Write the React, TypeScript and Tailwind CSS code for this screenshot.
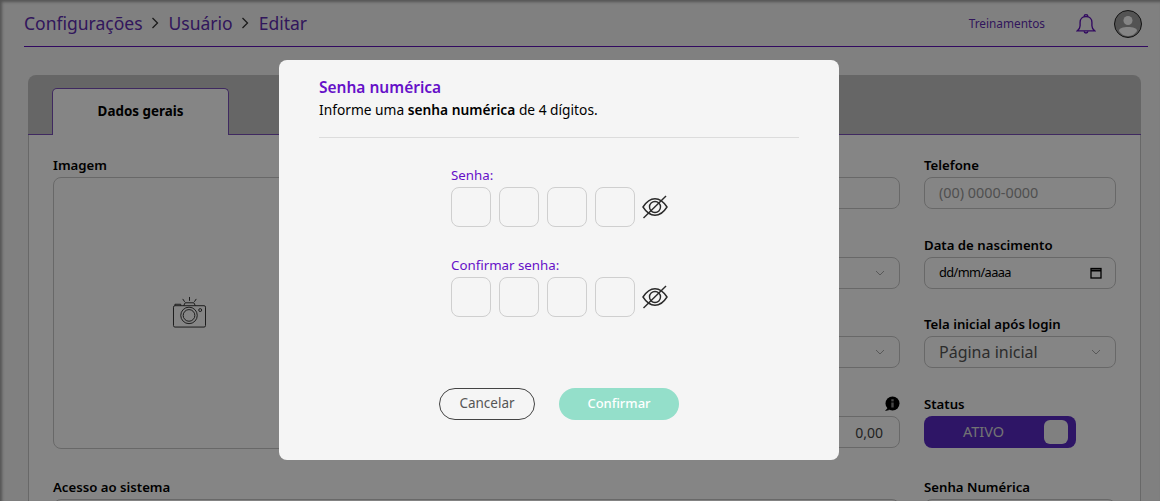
import React from "react";

const Label = ({ children, className = "" }: { children?: React.ReactNode; className?: string }) => (
  <div className={`h-[24px] text-[13.2px] font-semibold leading-[24px] text-black ${className}`}>{children}</div>
);

const Field = ({ children, className = "" }: { children?: React.ReactNode; className?: string }) => (
  <div className={`flex h-[32px] items-center justify-between rounded-lg border border-[#c8c8c8] px-[14px] text-[14px] text-[#444] ${className}`}>{children}</div>
);

const Chevron = () => (
  <svg width="10" height="6" viewBox="0 0 10 6" fill="none" stroke="#aaa" strokeWidth="1">
    <path d="M1 1l4 4 4-4" />
  </svg>
);

const EyeOff = () => (
  <svg width="26" height="24" viewBox="0 0 26 24" fill="none" stroke="#2a2a2a" strokeWidth="1.4" className="-ml-[1px]">
    <path d="M1 12C4.500 6.500 9 3.700 13 3.700S21.500 6.500 25 12C21.500 17.500 17 20.300 13 20.300S4.500 17.500 1 12Z" />
    <circle cx="13" cy="12" r="5.500" />
    <path d="M1.500 23L24 1" />
  </svg>
);

const PinRow = () => (
  <div className="flex items-center gap-2">
    <div className="size-10 rounded-lg border border-[#cfcfcf]" />
    <div className="size-10 rounded-lg border border-[#cfcfcf]" />
    <div className="size-10 rounded-lg border border-[#cfcfcf]" />
    <div className="size-10 rounded-lg border border-[#cfcfcf]" />
    <EyeOff />
  </div>
);

const Crumb = () => (
  <svg width="9" height="14" viewBox="0 0 9 14" fill="none" stroke="#333" strokeWidth="1.3" className="mx-[8.500px]">
    <path d="M1.500 2l5 5-5 5" />
  </svg>
);

export default function App() {
  return (
    <div className="relative h-[501px] w-[1160px] overflow-hidden bg-[#f5f5f5] font-['Noto_Sans',sans-serif]">
      <header className="ml-6 mr-3 flex h-[47px] items-center justify-between border-b border-[#5f12b8]">
        <div className="flex items-center text-[17.500px] text-[#5f2db0]">
          <span>Configurações</span>
          <Crumb />
          <span>Usuário</span>
          <Crumb />
          <span>Editar</span>
        </div>
        <div className="mr-[6px] flex items-center pt-[2px]">
          <span className="text-[11.800px] text-[#5f2db0]">Treinamentos</span>
          <svg width="20" height="22" viewBox="0 0 22 24" fill="none" stroke="#5f12b8" strokeWidth="1.500" className="ml-[31px]">
            <path d="M1.500 19.500c2-1.500 3-3 3-5.500V10c0-3.500 2.500-6.300 6.500-6.300S17.500 6.500 17.500 10v4c0 2.500 1 4 3 5.500Z" />
            <path d="M9 3.500C9 1 13 1 13 3.500M9 20c0 2.500 4 2.500 4 0" />
          </svg>
          <svg width="28" height="28" viewBox="0 0 28 28" className="ml-[18px]">
            <circle cx="14" cy="14" r="13.500" fill="#a0a0a0" stroke="#222" strokeWidth="1" />
            <circle cx="14" cy="10.500" r="4.500" fill="#fff" />
            <path d="M5 21c0-3 4-4 9-4s9 1 9 4c-2 3-5 5-9 5s-7-2-9-5Z" fill="#fff" />
          </svg>
        </div>
      </header>

      <main className="ml-[28px] mt-[28px] w-[1113px] overflow-hidden rounded-t-lg">
        <div className="flex h-[60px] items-end border-b border-[#7a50b8] bg-[#c4c4c4] pl-6">
          <div className="-mb-[1px] flex h-[47px] w-[177px] items-center justify-center rounded-t-[5px] border border-b-0 border-[#7a50b8] bg-white pb-[2px] text-[13.400px] font-bold text-black">
            Dados gerais
          </div>
        </div>
        <div className="h-[400px] border-x border-[#c8c8c8] bg-white px-6 pt-[18px]">
          <div className="flex gap-6">
            <div className="w-[272px]">
              <Label>Imagem</Label>
              <div className="flex h-[272px] items-center justify-center rounded-lg border border-[#c8c8c8] pb-[1px]">
                <svg width="37" height="33" viewBox="0 0 36 34" fill="none" stroke="#333" strokeWidth="1">
                  <path d="M18 1v4M11 3l2 3M25 3l-2 3" />
                  <rect x="1.500" y="10" width="33" height="22" rx="1.500" />
                  <path d="M12 10l1.500-3h9L24 10M3 10V8.500h6V10" />
                  <circle cx="17.500" cy="20" r="8.500" />
                  <circle cx="17.500" cy="20" r="6" />
                  <circle cx="29" cy="14.500" r="1.500" />
                </svg>
              </div>
            </div>
            <div className="flex w-[551px] flex-col">
              <Label />
              <Field />
              <Label className="mt-[24px]" />
              <Field><span /><Chevron /></Field>
              <Label className="mt-[23px]" />
              <Field><span /><Chevron /></Field>
              <div className="mt-[24px] flex h-[24px] items-center justify-end">
                <svg width="16" height="16" viewBox="0 0 16 16">
                  <circle cx="8.500" cy="7.500" r="7" fill="#000" />
                  <path d="M1 15l2.500-3 2 2Z" fill="#000" />
                  <rect x="7.300" y="6.500" width="2.400" height="5" fill="#888" />
                  <rect x="7.300" y="3.200" width="2.400" height="2.200" fill="#888" />
                </svg>
              </div>
              <Field className="justify-end"><span className="mr-[2px]">0,00</span></Field>
            </div>
            <div className="w-[192px]">
              <Label>Telefone</Label>
              <Field><span className="text-[14.400px] text-[#999]">(00) 0000-0000</span></Field>
              <Label className="mt-[24px]">Data de nascimento</Label>
              <Field>
                <span className="text-[12.800px] tracking-[-0.6px] text-black">dd/mm/aaaa</span>
                <svg width="12" height="12" viewBox="0 0 12 12" fill="none" stroke="#000" strokeWidth="1.300" className="-mr-[1px]">
                  <rect x="1" y="1.500" width="10" height="9.500" />
                  <path d="M1 3.500h10" strokeWidth="2" />
                </svg>
              </Field>
              <Label className="mt-[23px]">Tela inicial após login</Label>
              <Field className="pl-[14px] text-[16px] text-[#555]"><span>Página inicial</span><Chevron /></Field>
              <Label className="mt-[24px]">Status</Label>
              <div className="flex h-[32px] w-[152px] items-center rounded-lg bg-[#582ac4] pb-[1px] pl-[39px] pr-[8px] text-[14.500px] text-[#ddd]">
                <span>ATIVO</span>
                <div className="ml-auto size-[24px] rounded-md bg-[#f5f5f5]" />
              </div>
            </div>
          </div>
          <div className="mt-[26px] flex gap-6">
            <div className="w-[847px]">
              <Label>Acesso ao sistema</Label>
              <Field />
            </div>
            <div className="w-[192px]">
              <Label>Senha Numérica</Label>
              <Field />
            </div>
          </div>
        </div>
      </main>

      <div className="absolute inset-0 bg-black/48 shadow-[inset_2px_2px_3px_rgba(0,0,0,0.35)]" />

      <div className="absolute inset-0 pl-[279px] pt-[60px]">
        <div className="flex h-[400px] w-[560px] flex-col rounded-lg bg-[#f5f5f5] px-10">
          <div className="h-[78px] border-b border-[#dcdcdc] pt-[16px]">
            <h2 className="text-[15.500px] font-semibold leading-[22px] text-[#6610c8]">Senha numérica</h2>
            <p className="text-[13.750px] leading-[24px] text-black">
              Informe uma <b className="font-semibold">senha numérica</b> de 4 dígitos.
            </p>
          </div>
          <div className="ml-[132px] mt-[26px]">
            <div className="h-[23px] text-[13.300px] leading-[22px] text-[#6610c8]">Senha:</div>
            <PinRow />
            <div className="mt-[27px] h-[23px] text-[13.300px] leading-[22px] text-[#6610c8]">Confirmar senha:</div>
            <PinRow />
          </div>
          <div className="mt-[71px] flex justify-center gap-6">
            <button className="h-[32px] w-[96px] rounded-full border border-[#444] pb-[1px] text-[13.500px] text-[#555]">Cancelar</button>
            <button className="h-[32px] w-[120px] rounded-full bg-[#94dfca] pb-[1px] text-[13px] font-medium text-white">Confirmar</button>
          </div>
        </div>
      </div>
    </div>
  );
}
